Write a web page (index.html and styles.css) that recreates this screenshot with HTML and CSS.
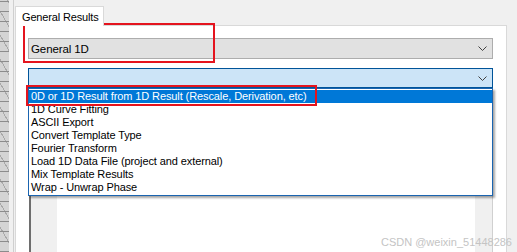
FILE: index.html
```html
<!DOCTYPE html>
<html lang="en">
<head>
  <meta charset="UTF-8" />
  <title>General Results</title>
  <link rel="stylesheet" href="styles.css">
</head>
<body>
  <div class="screen">
    <div class="hatch"></div>
    <div class="divider"></div>
    <div class="main">
      <div class="tabs">
        <div class="tab">General Results</div>
      </div>
      <div class="panel">
        <div class="combo combo-plain">
          <span>General 1D</span>
          <svg class="chevron" width="9" height="5" viewBox="0 0 9 5"><path d="M0.5 0.5 L4.5 4.5 L8.5 0.5" fill="none" stroke="#404040" stroke-width="1"/></svg>
        </div>
        <div class="combo combo-open">
          <span></span>
          <svg class="chevron" width="9" height="5" viewBox="0 0 9 5"><path d="M0.5 0.5 L4.5 4.5 L8.5 0.5" fill="none" stroke="#404040" stroke-width="1"/></svg>
        </div>
        <div class="group">
          <div class="group-side"></div>
          <div class="group-body"></div>
          <div class="group-side group-right"></div>
        </div>
        <ul class="dropdown">
          <li class="selected">0D or 1D Result from 1D Result (Rescale, Derivation, etc)</li>
          <li>1D Curve Fitting</li>
          <li>ASCII Export</li>
          <li>Convert Template Type</li>
          <li>Fourier Transform</li>
          <li>Load 1D Data File (project and external)</li>
          <li>Mix Template Results</li>
          <li>Wrap - Unwrap Phase</li>
        </ul>
      </div>
    </div>
    <div class="mark mark-combo"></div>
    <div class="mark mark-item"></div>
    <div class="watermark">CSDN @weixin_51448286</div>
  </div>
</body>
</html>
```

FILE: styles.css
```css
body { margin: 0; background: #f0f0f0; font-family: "Liberation Sans", Arial, sans-serif; font-size: 11px; letter-spacing: -0.1px; color: #000; }
.screen { position: relative; display: flex; width: 517px; height: 252px; overflow: hidden; }

.hatch { width: 9px; flex: none; background:
  repeating-linear-gradient(0deg, #8c8c8c 0 1px, transparent 1px 10px),
  repeating-linear-gradient(60deg, #a8a8a8 0 1px, transparent 1px 12px),
  #d4d4d4; }
.divider { width: 1px; flex: none; margin-left: 4px; background: #cfcfcf; }

.main { margin-left: 1px; width: 492px; flex: none; }
.tabs { display: flex; margin-top: 6px; }
.tab { width: 89px; height: 20px; box-sizing: border-box; background: #fff; border: 1px solid #d9d9d9; border-bottom: 0; padding: 4px 0 0 6px; white-space: nowrap; font-size: 11px; letter-spacing: -0.15px; position: relative; z-index: 1; margin-bottom: -1px; }

.panel { position: relative; background: #fff; border: 1px solid #d9d9d9; padding: 12px 13px 0 12px; height: 260px; }

.combo { display: flex; align-items: center; justify-content: space-between; box-sizing: border-box; padding: 0 5px 0 2px; }
.combo-plain { height: 21px; background: #e1e1e1; border: 1px solid #adadad; margin-bottom: 9px; font-size: 11.5px; }
.combo-open { height: 20px; background: #cce4f7; border: 1px solid #005499; }
.chevron { display: block; }

.group { display: grid; grid-template-columns: 26px 1fr 17px; margin: 10px 0 0 1px; height: 200px; border-left: 2px solid #6e6e6e; border-right: 1px solid #d0d0d0; }
.group-side { background: #f0f0f0; }
.group-body { background: #fff; }

.dropdown { position: absolute; top: 62px; left: 12px; width: 465px; box-sizing: border-box; margin: 0; padding: 1px 0; list-style: none; background: #fff; border: 1px solid #1a64b0; box-shadow: 2px 2px 2px rgba(0,0,0,0.35); }
.dropdown li { height: 13px; line-height: 13px; padding-left: 2px; white-space: nowrap; }
.dropdown li.selected { background: #0078d7; color: #fff; }

.mark { position: absolute; border: 2px solid #e4141e; box-sizing: border-box; }
.mark-combo { left: 23px; top: 23px; width: 192px; height: 40px; }
.mark-item { left: 26px; top: 85px; width: 291px; height: 21px; }

.watermark { position: absolute; right: 5px; bottom: 4px; font-size: 11px; letter-spacing: 0; color: #c4c4c4; }
```
